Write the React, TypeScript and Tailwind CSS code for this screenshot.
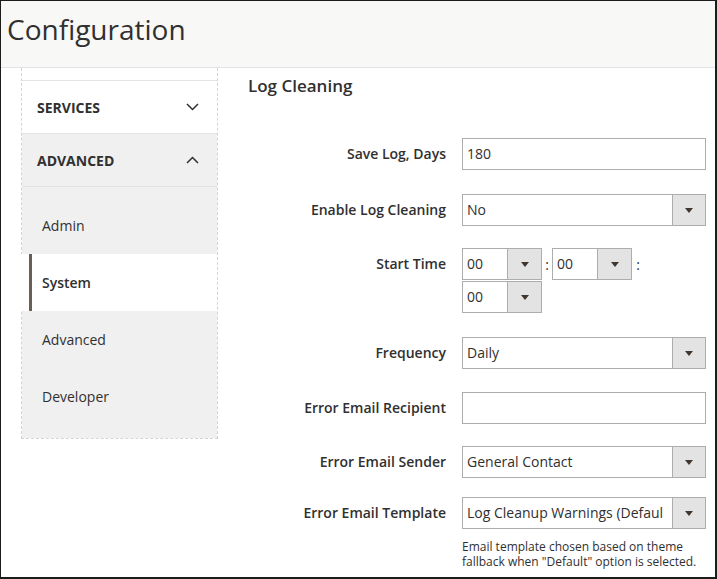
import React from "react";

function Arrow() {
  return (
    <div className="w-0 h-0 border-l-[4px] border-r-[4px] border-t-[5px] border-l-transparent border-r-transparent border-t-[#41362f]" />
  );
}

function Select({ value, width, arrowW = 33, h = "h-[32px]" }: { value: string; width: string; arrowW?: number; h?: string }) {
  return (
    <div className={`flex ${h} ${width} border border-[#adadad] bg-white`}>
      <div className="flex-1 min-w-0 overflow-hidden whitespace-nowrap pl-[4px] text-[14px] leading-[30px] text-[#303030]">{value}</div>
      <div
        className={`${arrowW === 33 ? "w-[33px]" : "w-[34px]"} shrink-0 bg-[#e3e3e3] border-l border-[#adadad] flex items-center justify-center`}
      >
        <Arrow />
      </div>
    </div>
  );
}

function Input({ value }: { value: string }) {
  return (
    <div className="h-[32px] w-[244px] border border-[#adadad] bg-white pl-[4px] text-[14px] leading-[30px] text-[#303030]">{value}</div>
  );
}

function Label({ children }: { children: React.ReactNode }) {
  return (
    <div className="w-[198px] shrink-0 text-right text-[14px] font-semibold leading-[32px] text-[#303030] whitespace-nowrap">{children}</div>
  );
}

function Chevron({ up }: { up?: boolean }) {
  return (
    <svg width="13" height="8" viewBox="0 0 13 8" className="block">
      <polyline
        points={up ? "1,7 6.5,1.5 12,7" : "1,1 6.5,6.5 12,1"}
        fill="none"
        stroke="#303030"
        strokeWidth="1.5"
      />
    </svg>
  );
}

export default function App() {
  return (
    <div className="w-[717px] h-[579px] overflow-hidden border-t border-l border-r-2 border-b-2 border-[#1c1c1c] bg-white font-['Open_Sans',sans-serif] text-[#303030]">
      <div className="h-[67px] bg-[#f8f8f6] border-b border-[#e3e3e3] pl-[6px] pt-[9px]">
        <div className="text-[28px] leading-[38px] text-[#303030]">Configuration</div>
      </div>
      <div className="flex">
        <div className="ml-[20px] w-[197px] shrink-0 self-start border-x border-b border-dashed border-[#d4d4d4]">
          <div className="h-[13px] border-b border-solid border-[#e3e3e3] bg-white" />
          <div className="h-[53px] border-b border-solid border-[#e3e3e3] bg-white flex items-center justify-between pl-[15px] pr-[18px]">
            <span className="text-[14px] font-bold">SERVICES</span>
            <Chevron />
          </div>
          <div className="h-[53px] border-b border-solid border-[#e3e3e3] bg-[#f0f0f0] flex items-center justify-between pl-[15px] pr-[18px]">
            <span className="text-[14px] font-bold">ADVANCED</span>
            <Chevron up />
          </div>
          <div className="bg-[#f0f0f0] pt-[10px] pb-[13px]">
            <div className="h-[57px] flex items-center pl-[20px] text-[14px]">Admin</div>
            <div className="h-[57px] -ml-px bg-white flex items-center pl-[8px]">
              <div className="h-full w-[3px] bg-[#676056]" />
              <span className="pl-[10px] text-[14px] font-semibold">System</span>
            </div>
            <div className="h-[57px] flex items-center pl-[20px] text-[14px]">Advanced</div>
            <div className="h-[57px] flex items-center pl-[20px] text-[14px]">Developer</div>
          </div>
        </div>
        <div className="ml-[30px] flex-1">
          <div className="mt-[6px] text-[17px] font-semibold leading-[24px]">Log Cleaning</div>
          <div className="mt-[40px] flex gap-[16px]">
            <Label>Save Log, Days</Label>
            <Input value="180" />
          </div>
          <div className="mt-[24px] flex gap-[16px]">
            <Label>Enable Log Cleaning</Label>
            <Select value="No" width="w-[244px]" />
          </div>
          <div className="mt-[22px] flex gap-[16px]">
            <Label>Start Time</Label>
            <div className="w-[244px]">
              <div className="flex items-center">
                <Select value="00" width="w-[80px]" arrowW={34} />
                <span className="w-[10px] text-center text-[14px]">:</span>
                <Select value="00" width="w-[80px]" arrowW={34} />
                <span className="w-[12px] text-center text-[14px]">:</span>
              </div>
              <div className="mt-[1px] flex">
                <Select value="00" width="w-[80px]" arrowW={34} />
              </div>
            </div>
          </div>
          <div className="mt-[24px] flex gap-[16px]">
            <Label>Frequency</Label>
            <Select value="Daily" width="w-[244px]" />
          </div>
          <div className="mt-[23px] flex gap-[16px]">
            <Label>Error Email Recipient</Label>
            <Input value="" />
          </div>
          <div className="mt-[22px] flex gap-[16px]">
            <Label>Error Email Sender</Label>
            <Select value="General Contact" width="w-[244px]" />
          </div>
          <div className="mt-[19px] flex gap-[16px]">
            <Label>Error Email Template</Label>
            <div className="w-[244px]">
              <Select value="Log Cleanup Warnings (Defaul" width="w-[244px]" />
              <div className="mt-[10px] text-[12px] leading-[15px] text-[#303030]">
                Email template chosen based on theme fallback when "Default" option is selected.
              </div>
            </div>
          </div>
        </div>
      </div>
    </div>
  );
}
